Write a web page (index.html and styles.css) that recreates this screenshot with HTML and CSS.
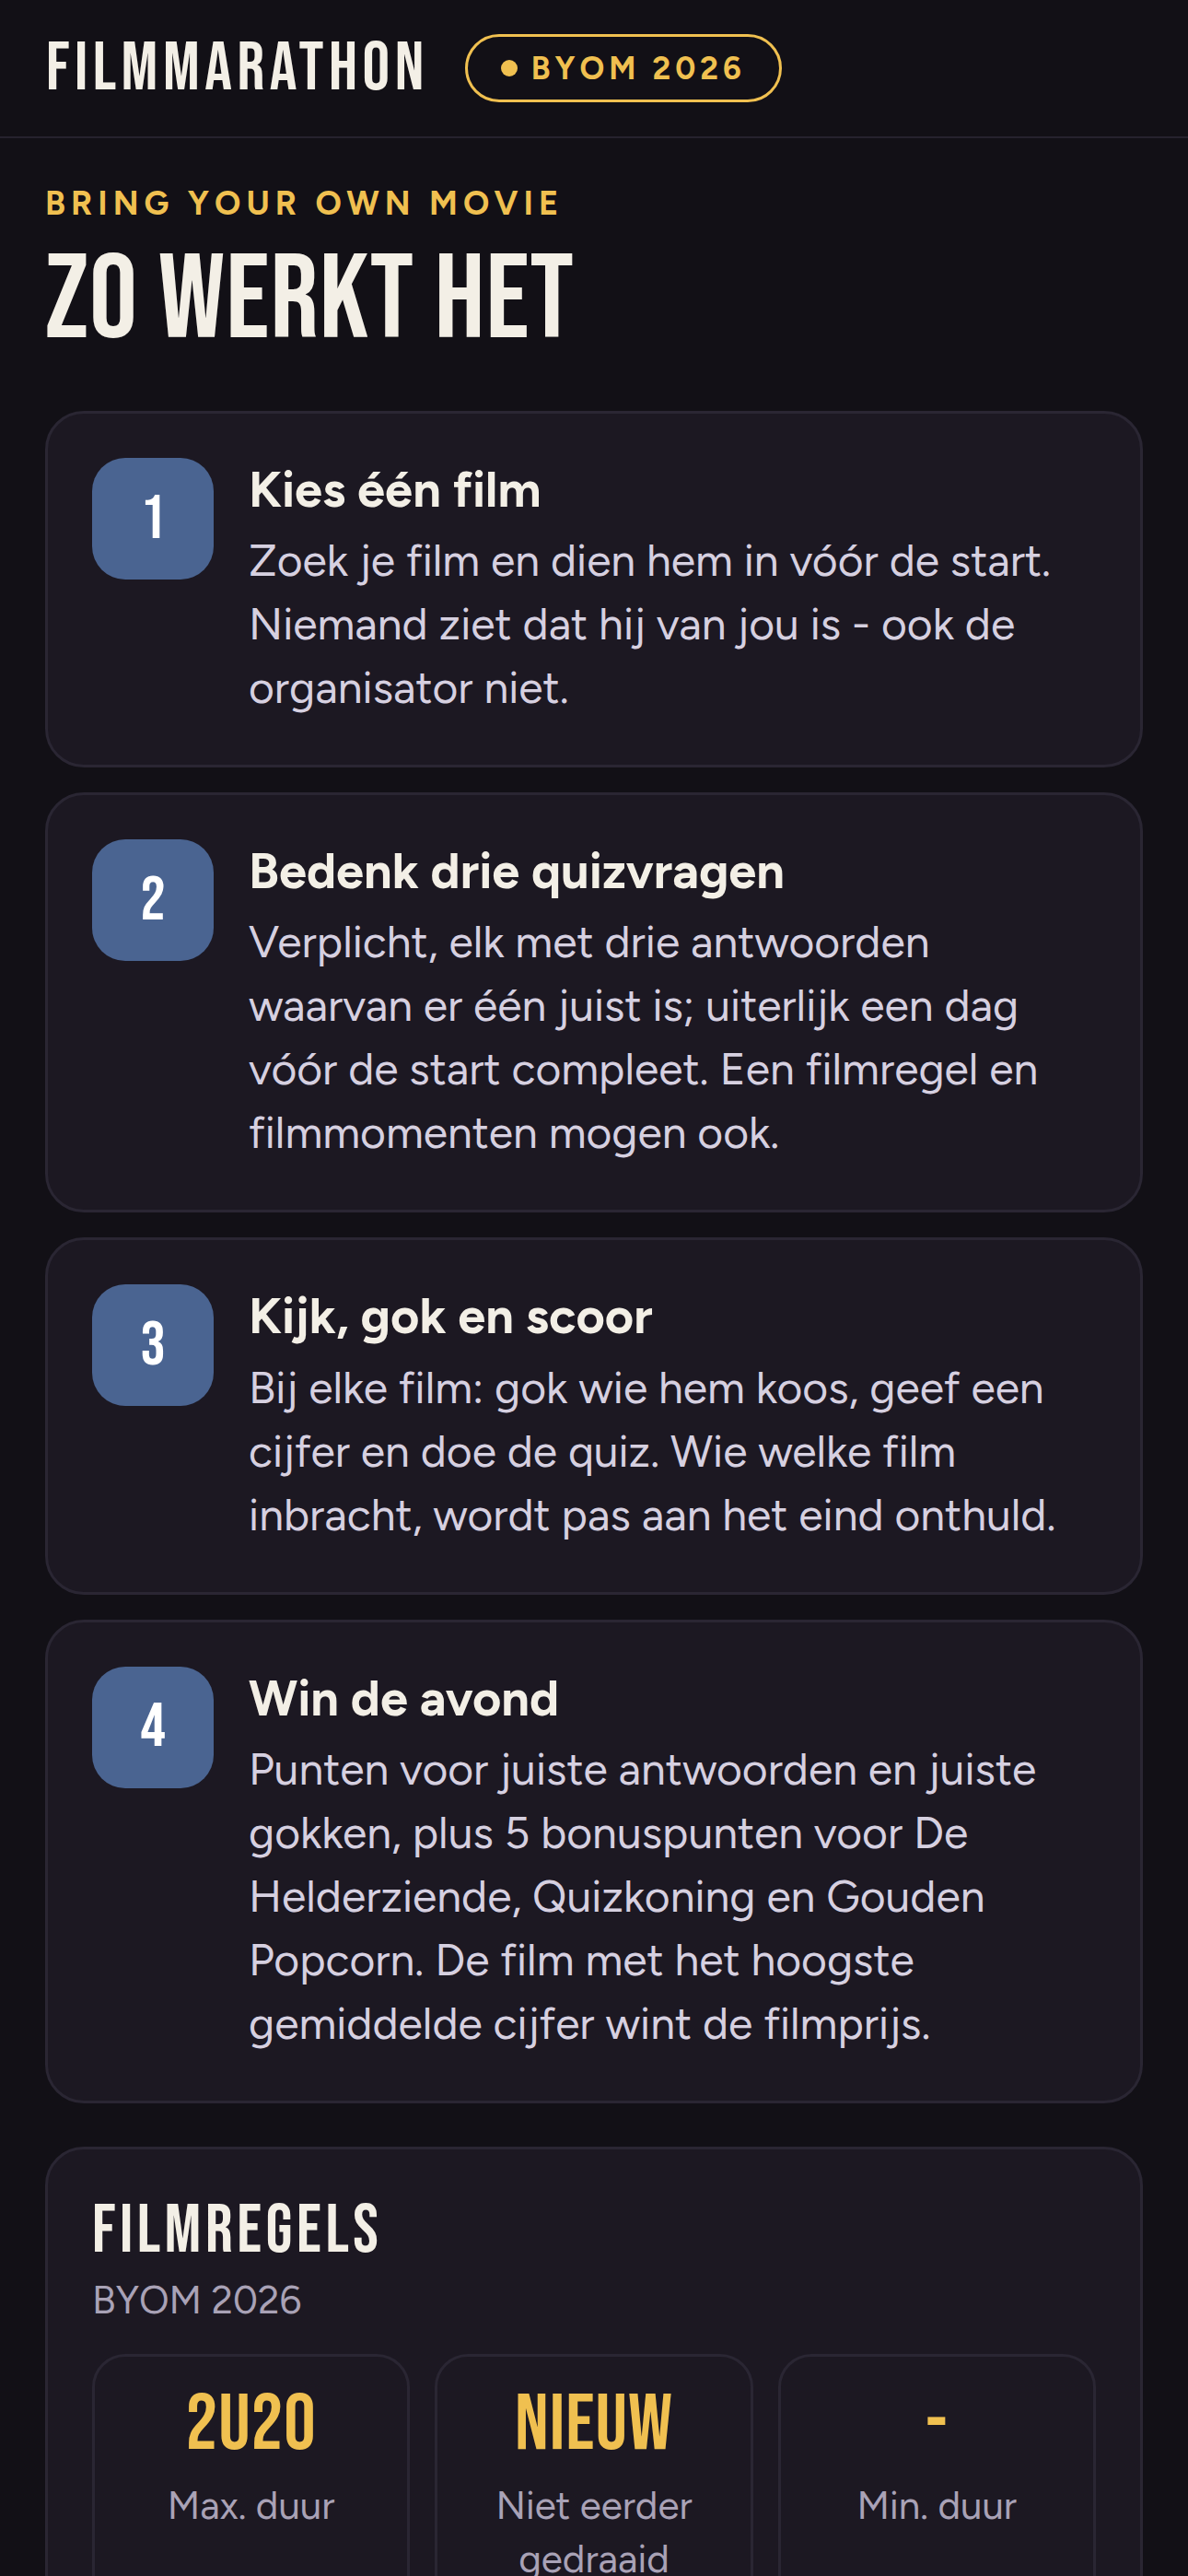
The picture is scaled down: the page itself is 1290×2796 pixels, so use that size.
FILE: index.html
```html
<!DOCTYPE html>
<html lang="nl">
<head>
    <meta charset="UTF-8" />
    <title>Filmmarathon - Zo werkt het</title>
    <link rel="stylesheet" href="styles.css">
</head>
<body>

    <header class="topbar">
        <div class="brand">FILMMARATHON</div>
        <div class="edition"><span class="dot"></span>BYOM 2026</div>
    </header>

    <main class="page">
        <p class="eyebrow">BRING YOUR OWN MOVIE</p>
        <h1 class="page-title">ZO WERKT HET</h1>

        <ol class="steps">
            <li class="step">
                <div class="step-num">1</div>
                <div class="step-body">
                    <h2>Kies één film</h2>
                    <p>Zoek je film en dien hem in vóór de start. Niemand ziet dat hij van jou is - ook de organisator niet.</p>
                </div>
            </li>
            <li class="step">
                <div class="step-num">2</div>
                <div class="step-body">
                    <h2>Bedenk drie quizvragen</h2>
                    <p>Verplicht, elk met drie antwoorden waarvan er één juist is; uiterlijk een dag vóór de start compleet. Een filmregel en filmmomenten mogen ook.</p>
                </div>
            </li>
            <li class="step">
                <div class="step-num">3</div>
                <div class="step-body">
                    <h2>Kijk, gok en scoor</h2>
                    <p>Bij elke film: gok wie hem koos, geef een cijfer en doe de quiz. Wie welke film inbracht, wordt pas aan het eind onthuld.</p>
                </div>
            </li>
            <li class="step">
                <div class="step-num">4</div>
                <div class="step-body">
                    <h2>Win de avond</h2>
                    <p>Punten voor juiste antwoorden en juiste gokken, plus 5 bonuspunten voor De Helderziende, Quizkoning en Gouden Popcorn. De film met het hoogste gemiddelde cijfer wint de filmprijs.</p>
                </div>
            </li>
        </ol>

        <section class="rules">
            <h2 class="rules-title">FILMREGELS</h2>
            <p class="rules-sub">BYOM 2026</p>
            <div class="rule-grid">
                <div class="rule">
                    <div class="rule-value">2U20</div>
                    <div class="rule-label">Max. duur</div>
                </div>
                <div class="rule">
                    <div class="rule-value">NIEUW</div>
                    <div class="rule-label">Niet eerder gedraaid</div>
                </div>
                <div class="rule">
                    <div class="rule-value">-</div>
                    <div class="rule-label">Min. duur</div>
                </div>
            </div>
        </section>
    </main>

</body>
</html>
```

FILE: styles.css
```css
body {
    margin: 0;
    background-color: #121016;
    color: #f3efe6;
    font-family: "Figtree", "Outfit", Lato, sans-serif;
}

.topbar {
    display: flex;
    align-items: center;
    height: 148px;
    padding: 0 50px;
    border-bottom: 2px solid #26222e;
}

.brand {
    font-family: "Bebas Neue", "Oswald", sans-serif;
    font-size: 74px;
    letter-spacing: 5.5px;
    color: #f3efe6;
}

.edition {
    display: inline-flex;
    align-items: center;
    gap: 15px;
    height: 74px;
    box-sizing: border-box;
    margin-left: 39px;
    padding: 0 36px;
    border: 3px solid #f0c050;
    border-radius: 40px;
    color: #f0c050;
    font-weight: bold;
    font-size: 34px;
    letter-spacing: 5px;
}

.dot {
    width: 18px;
    height: 18px;
    border-radius: 50%;
    background-color: #f0c050;
}

.page {
    padding: 0 49px 60px;
}

.eyebrow {
    margin: 49px 0 0;
    font-size: 36px;
    font-weight: bold;
    letter-spacing: 6px;
    color: #f0c050;
}

.page-title {
    margin: 20px 0 54px;
    font-family: "Bebas Neue", "Oswald", sans-serif;
    font-weight: normal;
    font-size: 130px;
    letter-spacing: 1px;
    line-height: 1;
    color: #f3efe6;
}

.steps {
    list-style: none;
    margin: 0;
    padding: 0;
}

.step {
    display: flex;
    gap: 38px;
    margin-bottom: 27px;
    padding: 48px 48px 49px;
    background-color: #1c1822;
    border: 3px solid #2a2633;
    border-radius: 42px;
}

.step-num {
    flex: none;
    display: flex;
    align-items: center;
    justify-content: center;
    width: 132px;
    height: 132px;
    border-radius: 36px;
    background-color: #4a6491;
    color: #ffffff;
    font-family: "Bebas Neue", "Oswald", sans-serif;
    font-size: 68px;
}

.step-body h2 {
    margin: 0 0 7px;
    font-size: 54px;
    line-height: 1.3;
    font-weight: bold;
    color: #f3efe6;
}

.step-body p {
    margin: 0;
    font-size: 48px;
    line-height: 69px;
    color: #d6d0e0;
}

.rules {
    margin-top: 47px;
    padding: 48px;
    background-color: #1c1822;
    border: 3px solid #2a2633;
    border-radius: 42px;
}

.rules-title {
    margin: 0;
    font-family: "Bebas Neue", "Oswald", sans-serif;
    font-weight: normal;
    font-size: 74px;
    letter-spacing: 4.5px;
    line-height: 1.1;
}

.rules-sub {
    margin: 10px 0 32px;
    font-size: 42px;
    line-height: 1.2;
    color: #a9a2b6;
}

.rule-grid {
    display: grid;
    grid-template-columns: repeat(3, 1fr);
    gap: 27px;
}

.rule {
    padding: 32px 30px 36px;
    border: 3px solid #2a2633;
    border-radius: 36px;
    text-align: center;
}

.rule-value {
    font-family: "Bebas Neue", "Oswald", sans-serif;
    font-size: 86px;
    letter-spacing: 1px;
    line-height: 1;
    color: #f0c050;
}

.rule-label {
    margin-top: 15px;
    font-size: 42px;
    line-height: 58px;
    color: #a9a2b6;
}
```
